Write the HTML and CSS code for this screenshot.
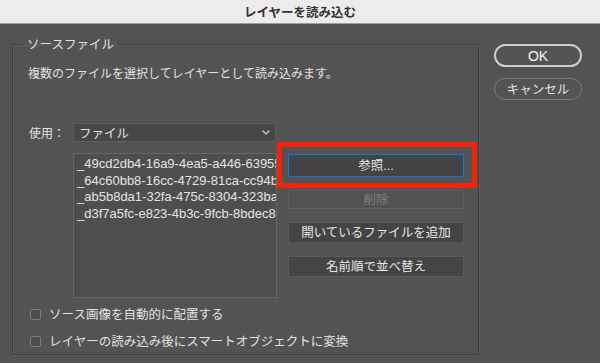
FILE: index.html
```html
<!DOCTYPE html>
<html lang="ja">
<head>
  <meta charset="UTF-8" />
  <title>レイヤーを読み込む</title>
  <link rel="stylesheet" href="styles.css">
</head>
<body>

<div class="titlebar">レイヤーを読み込む</div>

<div class="dialog">
  <!-- Source files group -->
  <fieldset class="group">
    <legend>ソースファイル</legend>
    <div class="desc">複数のファイルを選択してレイヤーとして読み込みます。</div>

    <div class="use-row">
      <span class="use-label">使用：</span>
      <div class="select">
        <span>ファイル</span>
        <svg class="arrow" width="8" height="5" viewBox="0 0 8 5"><polyline points="0.5,0.5 4,4 7.5,0.5" fill="none" stroke="#cfcfcf" stroke-width="1.2"/></svg>
      </div>
    </div>

    <div class="files-row">
      <div class="file-list">
        <div>_49cd2db4-16a9-4ea5-a446-63955fd0a1c2</div>
        <div>_64c60bb8-16cc-4729-81ca-cc94be3f1e07</div>
        <div>_ab5b8da1-32fa-475c-8304-323baa9c7d41</div>
        <div>_d3f7a5fc-e823-4b3c-9fcb-8bdec8b2f6a9</div>
      </div>
      <div class="file-buttons">
        <div class="highlight"></div>
        <button class="btn btn-focus">参照...</button>
        <button class="btn btn-disabled">削除</button>
        <button class="btn">開いているファイルを追加</button>
        <button class="btn">名前順で並べ替え</button>
      </div>
    </div>

    <label class="check"><span class="box"></span>ソース画像を自動的に配置する</label>
    <label class="check"><span class="box"></span>レイヤーの読み込み後にスマートオブジェクトに変換</label>
  </fieldset>

  <!-- Dialog actions -->
  <div class="actions">
    <button class="pill pill-ok">OK</button>
    <button class="pill">キャンセル</button>
  </div>
</div>

</body>
</html>
```

FILE: styles.css
```css
* {
  box-sizing: border-box;
}

html, body {
  margin: 0;
  padding: 0;
  width: 600px;
  height: 363px;
  overflow: hidden;
  background: #535353;
  color: #e2e2e2;
  font-family: 'Noto Sans CJK JP', sans-serif;
  font-size: 12px;
}

.titlebar {
  height: 24px;
  line-height: 23px;
  background: #eeebed;
  border-bottom: 1px solid #9d9d9d;
  color: #333;
  font-weight: bold;
  font-size: 12.5px;
  text-align: center;
}

.dialog {
  display: flex;
  align-items: flex-start;
  padding-left: 12px;
}

.group {
  margin: 12px 0 0 0;
  width: 467px;
  padding: 0 0 5px 15px;
  border: 1px solid #3e3e3e;
  box-shadow: inset 1px 1px 0 #5d5d5d, 1px 1px 0 #5d5d5d;
  min-width: 0;
}

.group legend {
  padding: 0 4px;
  margin-left: -5px;
  line-height: 16px;
  font-size: 12.5px;
}

.desc {
  margin-top: 13px;
  line-height: 16px;
}

.use-row {
  display: flex;
  align-items: center;
  margin-top: 42px;
}

.use-label {
  width: 45px;
  padding-left: 1px;
}

.select {
  width: 203px;
  height: 19px;
  display: flex;
  align-items: center;
  justify-content: space-between;
  padding: 0 5px 0 5px;
  background: #474747;
  border: 1px solid #5f5f5f;
  font-size: 12.5px;
}

.files-row {
  display: flex;
  margin-top: 11px;
  margin-left: 45px;
}

.file-list {
  width: 204px;
  height: 145px;
  padding: 2px 0 0 3px;
  background: #4e4e4e;
  border: 1px solid #666;
  overflow: hidden;
  white-space: nowrap;
  font-family: 'Liberation Sans', sans-serif;
  font-size: 13px;
  line-height: 16.7px;
  color: #e4e4e4;
}

.file-buttons {
  position: relative;
  display: flex;
  flex-direction: column;
  gap: 13px;
  margin-left: 11px;
  padding-top: 1px;
  width: 176px;
}

.btn {
  height: 21px;
  padding: 0;
  background: #444;
  border: 1px solid #5a5a5a;
  border-radius: 1px;
  color: #e6e6e6;
  font-family: 'Liberation Sans', 'Noto Sans CJK JP', sans-serif;
  font-size: 12.5px;
  line-height: 18px;
}

.btn-focus {
  height: 23px;
  margin-bottom: -2px;
  border: 1.5px solid #1a73d8;
  background: #434343;
}

.btn-disabled {
  height: 19px;
  margin-top: 2px;
  background: #525252;
  border-color: #5f5f5f;
  color: #7e7e7e;
}

.highlight {
  position: absolute;
  left: -11px;
  top: -11px;
  width: 200px;
  height: 46px;
  border: 5px solid #f2230b;
}

.check {
  display: flex;
  align-items: center;
  gap: 8px;
  line-height: 16px;
  margin-top: 8px;
  padding-left: 2px;
  font-size: 12.5px;
}

.check + .check {
  margin-top: 11px;
}

.box {
  width: 11px;
  height: 11px;
  border: 1px solid #7b7b7b;
  border-radius: 2px;
  background: #4c4c4c;
}

.actions {
  display: flex;
  flex-direction: column;
  gap: 11px;
  margin: 20px 0 0 15px;
}

.pill {
  width: 88px;
  height: 22px;
  padding: 0;
  background: transparent;
  border: 1.5px solid #7a7a7a;
  border-radius: 12px;
  color: #e4e4e4;
  font-family: 'Noto Sans CJK JP', sans-serif;
  font-size: 12.5px;
  line-height: 18px;
}

.pill-ok {
  height: 23px;
  border: 2px solid #cdcdcd;
  color: #f4f4f4;
  font-family: 'Liberation Sans', sans-serif;
  font-size: 14px;
}
```
